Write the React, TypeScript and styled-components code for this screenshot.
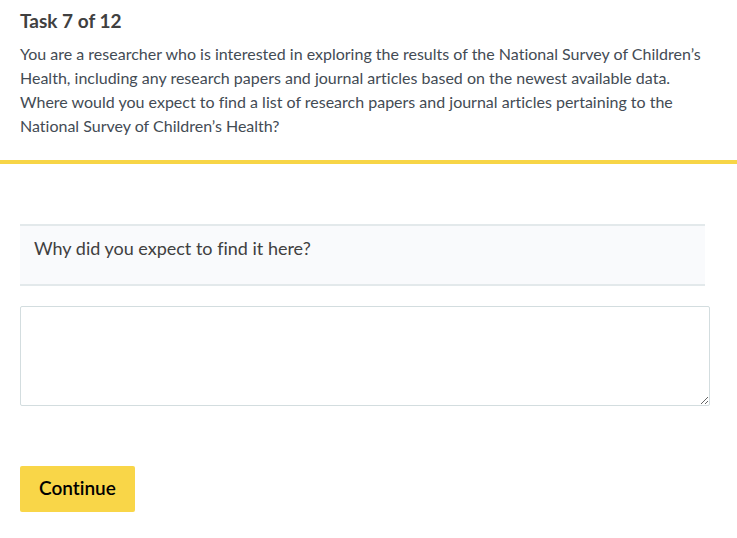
import React from "react";
import styled, { createGlobalStyle } from "styled-components";

const GlobalStyle = createGlobalStyle`
  *, *::before, *::after { box-sizing: border-box; }
  body {
    margin: 0;
    background: #ffffff;
    color: #434b54;
    font-family: "Lato", "Open Sans", sans-serif;
    font-variant-ligatures: none;
  }
`;

const TaskHeader = styled.header`
  padding: 8px 20px 22px;
  border-bottom: 4px solid #f7d547;
`;

const TaskTitle = styled.h1`
  margin: 0 0 8px;
  font-size: 19px;
  line-height: 26px;
  font-weight: 700;
  color: #404040;
`;

const TaskText = styled.p`
  margin: 0;
  font-size: 16px;
  line-height: 24px;
`;

const Form = styled.form`
  padding: 60px 27px 26px 20px;
`;

const Question = styled.label`
  display: block;
  margin-right: 5px;
  padding: 9px 14px 22px;
  border-top: 2px solid #e3e9eb;
  border-bottom: 2px solid #e3e9eb;
  background: #f9fafc;
  color: #404040;
  font-size: 18px;
  line-height: 27px;
`;

const Answer = styled.textarea`
  display: block;
  width: 100%;
  height: 100px;
  margin: 20px 0 60px;
  padding: 10px;
  border: 1px solid #d3dddf;
  border-radius: 2px;
  background: #ffffff;
  font: inherit;
  resize: both;
`;

const ContinueButton = styled.button`
  padding: 9px 19px 11px;
  border: 0;
  border-radius: 2px;
  background: #f9d648;
  color: #000000;
  font-family: inherit;
  font-variant-ligatures: none;
  font-size: 19px;
  line-height: 26px;
  font-weight: 600;
`;

export default function App() {
  return (
    <>
      <GlobalStyle />
      <TaskHeader>
        <TaskTitle>Task 7 of 12</TaskTitle>
        <TaskText>
          You are a researcher who is interested in exploring the results of the National Survey of Children’s
          Health, including any research papers and journal articles based on the newest available data.
          Where would you expect to find a list of research papers and journal articles pertaining to the
          National Survey of Children’s Health?
        </TaskText>
      </TaskHeader>
      <Form onSubmit={(event) => event.preventDefault()}>
        <Question htmlFor="answer">Why did you expect to find it here?</Question>
        <Answer id="answer" />
        <ContinueButton type="submit">Continue</ContinueButton>
      </Form>
    </>
  );
}
